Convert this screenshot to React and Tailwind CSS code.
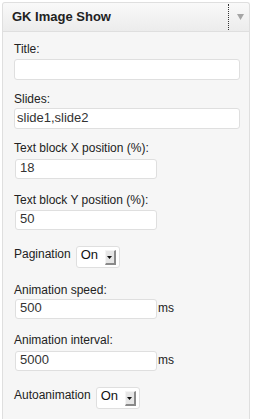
import React from 'react';

function Field({ label, value, short, unit, labelTop, inputTop, h = 20 }) {
  return (
    <div className={labelTop}>
      <div className="leading-[15px]">{label}</div>
      <div className={`flex items-start ${inputTop}`}>
        <div
          className={`${short ? 'w-[142px] ml-[1px] pl-[4px]' : 'w-[226px] pl-[2px]'} ${h === 21 ? 'h-[21px] pt-[1px]' : 'h-[20px]'} bg-white border border-[#dfdfdf] rounded-[3px] text-[13px] leading-[16px] text-[#333]`}
        >
          {value}
        </div>
        {unit && <span className="ml-[1px] leading-[18px] text-[12px]">{unit}</span>}
      </div>
    </div>
  );
}

function SelectBox({ value }) {
  return (
    <div className="w-[44px] h-[22px] bg-white border border-[#dfdfdf] rounded-[3px] flex items-start">
      <span className="pl-[4px] text-[13px] leading-[15px] text-[#111]">{value}</span>
      <div className="ml-auto mr-[3px] mt-[3px] w-[11px] h-[15px] bg-[#e6e6e6] border-t border-l border-t-[#f4f4f4] border-l-[#f4f4f4] border-r-2 border-b-2 border-r-[#8a8a8a] border-b-[#8a8a8a] flex items-center justify-center">
        <svg width="5" height="3" viewBox="0 0 5 3">
          <path d="M0 0h5L2.5 3z" fill="#111" />
        </svg>
      </div>
    </div>
  );
}

export default function App() {
  return (
    <div className="min-h-[419px] bg-white pl-[2px] pt-[2px] font-['Liberation_Sans',Arial,sans-serif] text-[12px] text-[#222]">
      <div className="w-[248px] h-[417px] border border-b-0 border-[#dfdfdf] rounded-t-[3px] bg-[#f6f6f6] flex flex-col">
        {/* Widget header */}
        <div className="h-[29px] border-b border-[#dfdfdf] bg-gradient-to-b from-[#f9f9f9] to-[#ececec] rounded-t-[3px] flex items-center pl-[9px]">
          <span className="font-bold text-[13px] text-[#222]">GK Image Show</span>
          <div className="ml-auto self-stretch my-[1px] w-[21px] border-l border-dotted border-[#333] flex items-center pl-[8px]">
            <svg width="7" height="6" viewBox="0 0 7 6">
              <path d="M0 0h7L3.5 6z" fill="#a5a5a5" />
            </svg>
          </div>
        </div>

        {/* Widget form */}
        <div className="pl-[11px] pt-[10px]">
          <Field label="Title:" value="" labelTop="" inputTop="mt-[2px]" h={21} />
          <Field label="Slides:" value="slide1,slide2" labelTop="mt-[12px]" inputTop="mt-[1px]" h={21} />
          <Field label="Text block X position (%):" value="18" short labelTop="mt-[12px]" inputTop="mt-[3px]" />
          <Field label="Text block Y position (%):" value="50" short labelTop="mt-[14px]" inputTop="mt-[2px]" />

          <div className="mt-[16px] flex items-start">
            <span className="mt-[1px] leading-[15px] mr-[5px]">Pagination</span>
            <SelectBox value="On" />
          </div>

          <Field label="Animation speed:" value="500" short unit="ms" labelTop="mt-[15px]" inputTop="mt-[1px]" />
          <Field label="Animation interval:" value="5000" short unit="ms" labelTop="mt-[14px]" inputTop="mt-[3px]" />

          <div className="mt-[16px] flex items-start">
            <span className="mt-[1px] leading-[15px] mr-[5px]">Autoanimation</span>
            <SelectBox value="On" />
          </div>
        </div>
      </div>
    </div>
  );
}
